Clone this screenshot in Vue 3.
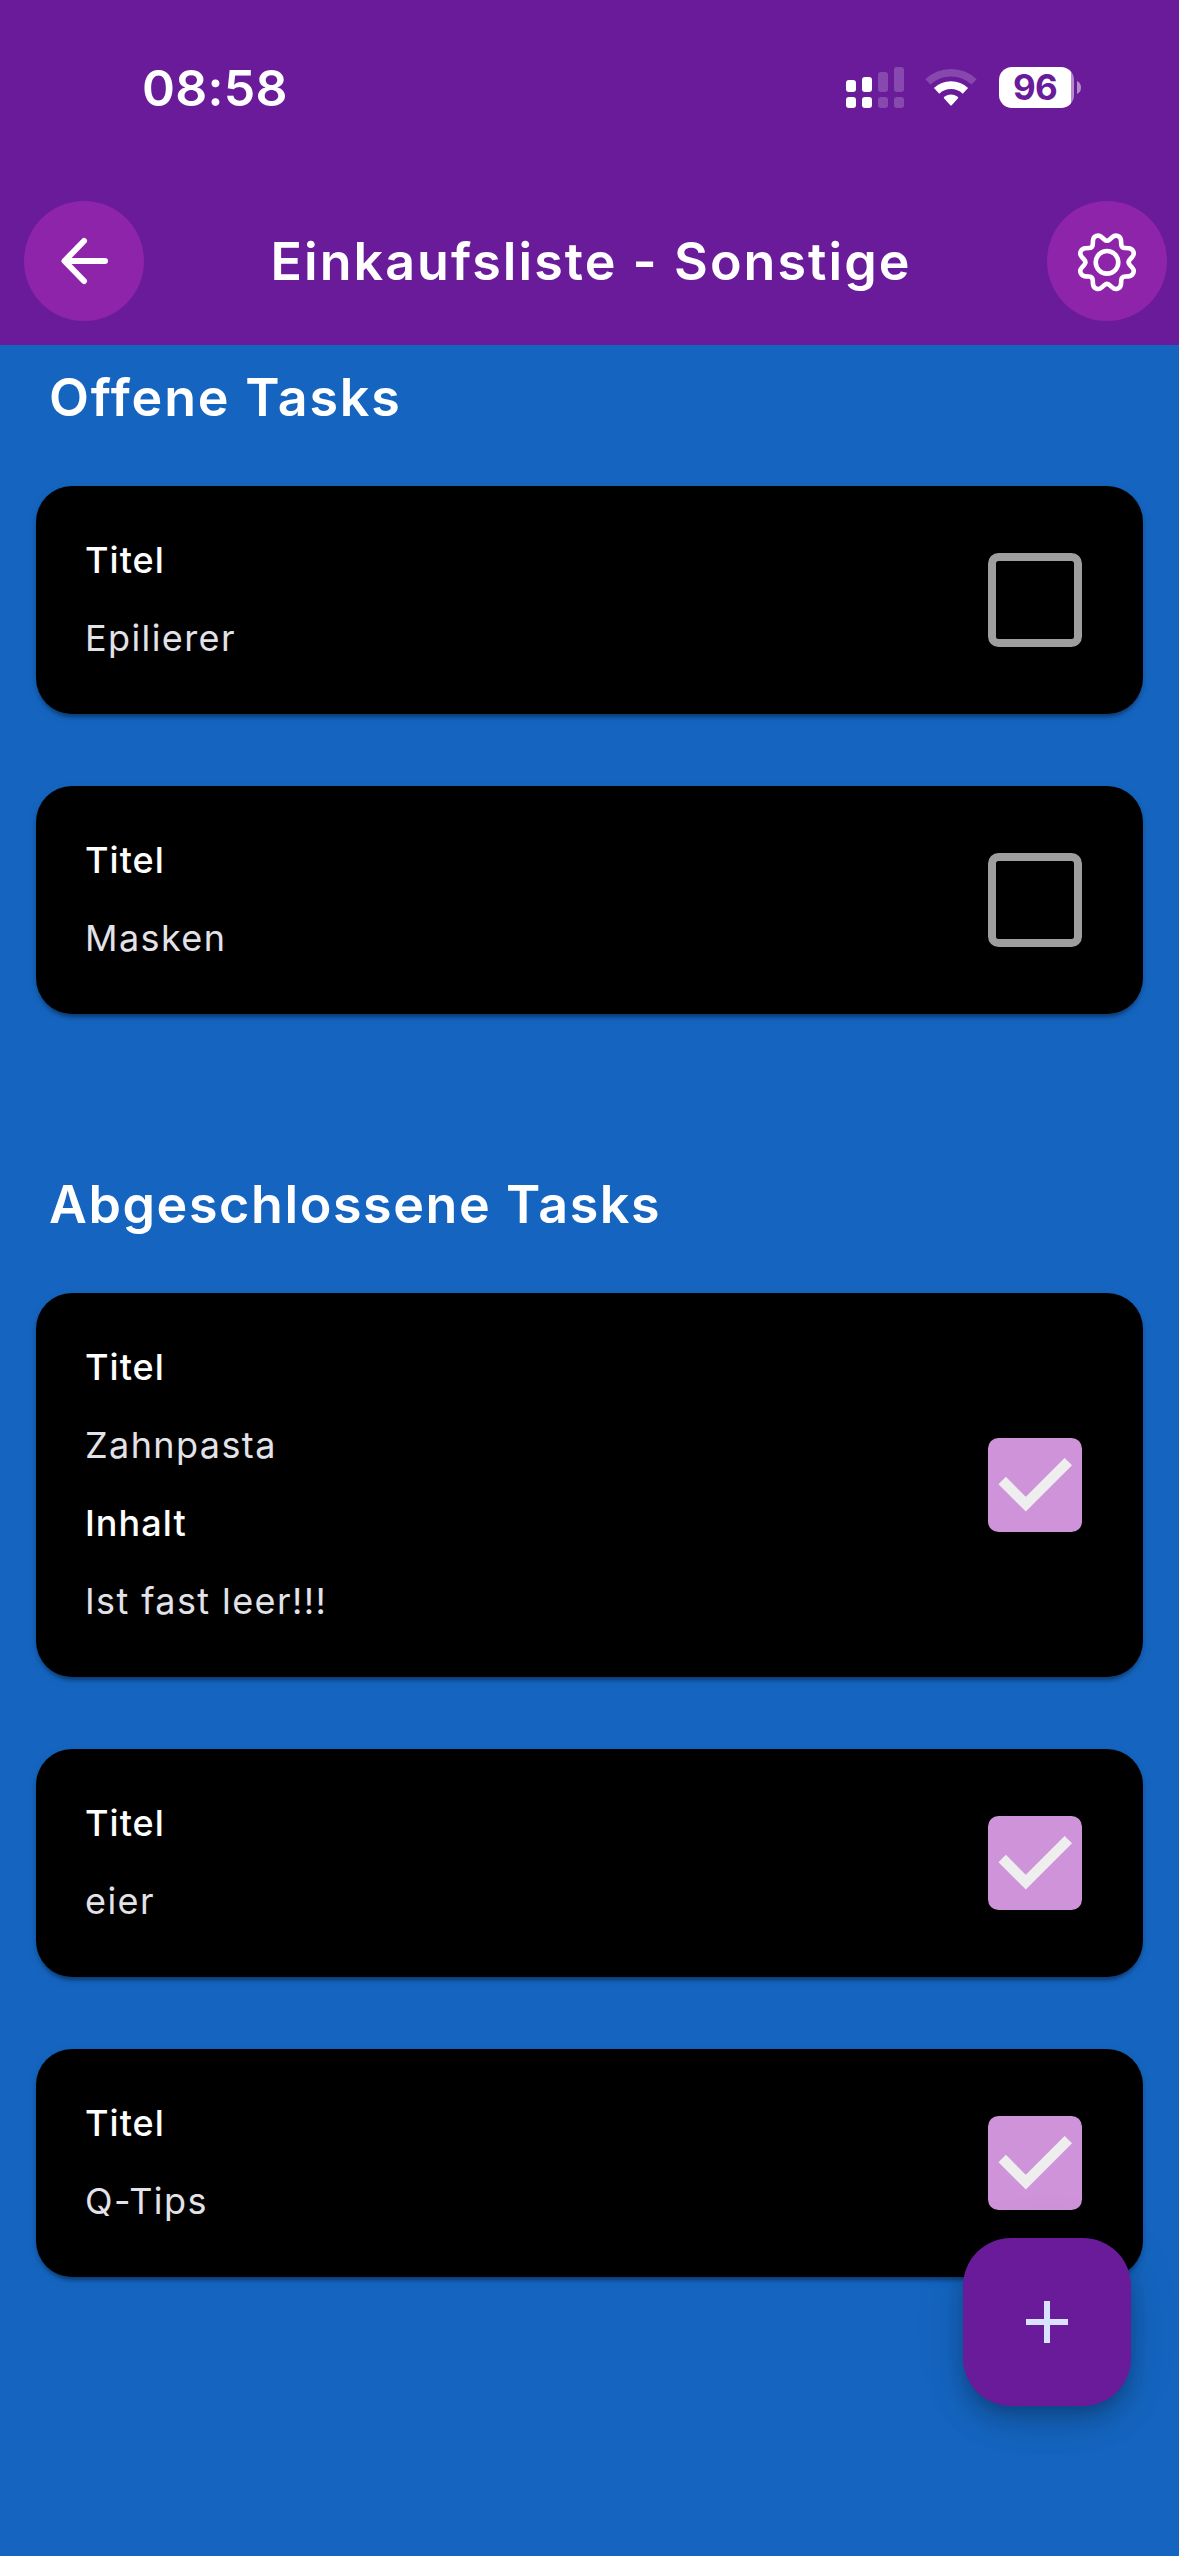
<script setup>
import { reactive } from 'vue'

const sections = reactive([
  {
    heading: 'Offene Tasks',
    kind: 'open',
    tasks: [
      { titel: 'Epilierer', done: false },
      { titel: 'Masken', done: false },
    ],
  },
  {
    heading: 'Abgeschlossene Tasks',
    kind: 'closed',
    tasks: [
      { titel: 'Zahnpasta', inhalt: 'Ist fast leer!!!', done: true },
      { titel: 'eier', done: true },
      { titel: 'Q-Tips', done: true },
    ],
  },
])

// Gear outline: eight teeth, every corner softened with a quadratic curve.
function gearPath(cx, cy) {
  const pts = []
  for (let k = 0; k < 8; k++) {
    for (const [deg, r, soft] of [[0, 20.4, 3.6], [16, 28.6, 3.6], [29, 28.6, 3.6]]) {
      const a = ((k * 45 + deg - 90) * Math.PI) / 180
      pts.push({ x: cx + r * Math.cos(a), y: cy + r * Math.sin(a), soft })
    }
  }
  const toward = (p, q, d) => {
    const len = Math.hypot(q.x - p.x, q.y - p.y)
    const t = Math.min(d, len * 0.45) / len
    return `${(p.x + (q.x - p.x) * t).toFixed(2)} ${(p.y + (q.y - p.y) * t).toFixed(2)}`
  }
  return (
    pts
      .map((p, i) => {
        const prev = pts[(i + pts.length - 1) % pts.length]
        const next = pts[(i + 1) % pts.length]
        return `${i ? 'L' : 'M'}${toward(p, prev, p.soft)}Q${p.x.toFixed(2)} ${p.y.toFixed(2)} ${toward(p, next, p.soft)}`
      })
      .join('') + 'Z'
  )
}
const gear = gearPath(60, 61.3)
</script>

<template>
  <div class="screen">
    <header class="top">
      <div class="status">
        <span class="clock">08:58</span>
        <div class="indicators">
          <svg class="signal" width="58" height="41" viewBox="0 0 58 41" fill="#fff">
            <rect x="0" y="13" width="10" height="12" rx="3" />
            <rect x="0" y="30" width="10" height="11" rx="3" />
            <rect x="16" y="10" width="10" height="15" rx="3" />
            <rect x="16" y="30" width="10" height="11" rx="3" />
            <g opacity="0.2">
              <rect x="32" y="5" width="10" height="20" rx="3" />
              <rect x="32" y="30" width="10" height="11" rx="3" />
              <rect x="48" y="0" width="10" height="25" rx="3" />
              <rect x="48" y="30" width="10" height="11" rx="3" />
            </g>
          </svg>
          <svg class="wifi" width="52" height="41" viewBox="0 0 52 41">
            <path d="M2.9 14.9A33.6 33.6 0 0 1 49.1 14.9" fill="none" stroke="#fff" stroke-opacity="0.2" stroke-width="7.4" />
            <path d="M11.6 23.8A21 21 0 0 1 40.4 23.8" fill="none" stroke="#fff" stroke-width="7.8" />
            <path d="M19.2 31.6Q18.2 30.6 19.3 29.8Q26 25.2 32.7 29.8Q33.8 30.6 32.8 31.6L26.7 38.2Q26 38.9 25.3 38.2Z" fill="#fff" />
          </svg>
          <div class="battery">
            <div class="cell"><span class="level">96</span></div>
            <svg width="4" height="13" viewBox="0 0 4 13"><path d="M0 0Q4 2 4 6.5T0 13Z" fill="#fff" fill-opacity="0.5" /></svg>
          </div>
        </div>
      </div>
      <div class="appbar">
        <button class="round" aria-label="Zurück">
          <svg width="120" height="120" viewBox="0 0 120 120" fill="none" stroke="#fff" stroke-width="6" stroke-linecap="round" stroke-linejoin="round">
            <path d="M60 40L40.5 60L60 80M41 60H81" />
          </svg>
        </button>
        <h1 class="title">Einkaufsliste - Sonstige</h1>
        <button class="round" aria-label="Einstellungen">
          <svg width="120" height="120" viewBox="0 0 120 120" fill="none" stroke="#fff" stroke-width="4.6" stroke-linejoin="round">
            <path :d="gear" />
            <circle cx="60" cy="61.3" r="11.3" />
          </svg>
        </button>
      </div>
    </header>

    <main>
      <section v-for="s in sections" :key="s.kind" :class="s.kind">
        <h2>{{ s.heading }}</h2>
        <div class="list">
          <article v-for="t in s.tasks" :key="t.titel" class="card">
            <dl>
              <dt>Titel</dt>
              <dd>{{ t.titel }}</dd>
              <template v-if="t.inhalt">
                <dt>Inhalt</dt>
                <dd>{{ t.inhalt }}</dd>
              </template>
            </dl>
            <button class="check" :class="{ on: t.done }" aria-label="Erledigt" @click="t.done = !t.done">
              <svg v-if="t.done" width="94.5" height="94.5" viewBox="0 0 18 18" fill="none" stroke="#eee" stroke-width="2">
                <path d="M2.7 8.1L7.2 12.6L15.3 4.5" />
              </svg>
            </button>
          </article>
        </div>
      </section>
    </main>

    <button class="fab" aria-label="Neuer Task">
      <svg width="42" height="42" viewBox="0 0 42 42" fill="#d9e2ff"><path d="M18 0H24V18H42V24H24V42H18V24H0V18H18Z" /></svg>
    </button>
  </div>
</template>

<style>
body {
  margin: 0;
  background: #1565c0;
}
</style>

<style scoped>
.screen {
  position: relative;
  box-sizing: border-box;
  width: 1179px;
  height: 2556px;
  overflow: hidden;
  background: #1565c0;
  color: #fff;
  font-family: Inter, "Liberation Sans", sans-serif;
}
button {
  padding: 0;
  border: 0;
  background: none;
}
h1, h2, dl, dd {
  margin: 0;
}
.top {
  height: 345px;
  background: #6a1b9a;
}
.status {
  display: flex;
  align-items: center;
  justify-content: space-between;
  height: 175px;
  padding: 0 98px 0 142px;
}
.clock {
  font-size: 50px;
  font-weight: 600;
  letter-spacing: 0.3px;
}
.indicators {
  display: flex;
  align-items: center;
}
.wifi {
  margin: 0 22px 0 21px;
}
.battery {
  display: flex;
  align-items: center;
  gap: 3px;
}
.cell {
  display: flex;
  align-items: center;
  justify-content: center;
  box-sizing: border-box;
  width: 75px;
  height: 41px;
  padding-right: 3px;
  border-radius: 13px;
  background: linear-gradient(90deg, #fff 72px, rgba(255, 255, 255, 0.5) 72px);
}
.level {
  color: #6a1b9a;
  font-size: 35px;
  font-weight: 700;
  line-height: 41px;
  letter-spacing: -0.7px;
}
.appbar {
  display: flex;
  align-items: center;
  height: 168px;
  padding: 2px 12px 0 24px;
}
.round {
  display: flex;
  width: 120px;
  height: 120px;
  border-radius: 50%;
  background: #8e24aa;
}
.title {
  flex: 1;
  padding: 2px 9px 0 0;
  font-size: 52px;
  font-weight: 600;
  line-height: 72px;
  letter-spacing: 2.05px;
  text-align: center;
  white-space: nowrap;
}
h2 {
  height: 72px;
  padding-left: 13px;
  font-size: 52px;
  font-weight: 600;
  line-height: 72px;
  letter-spacing: 1.85px;
}
.closed h2 {
  letter-spacing: 1.6px;
}
main {
  display: flex;
  flex-direction: column;
  gap: 155px;
  padding: 17px 36px 0;
}
section {
  display: flex;
  flex-direction: column;
  gap: 52px;
}
.list {
  display: flex;
  flex-direction: column;
  gap: 72px;
}
.card {
  display: flex;
  align-items: center;
  justify-content: space-between;
  padding: 35px 61px 37px 49px;
  border-radius: 36px;
  background: #000;
  box-shadow: 0 6px 3px -3px rgba(0, 0, 0, 0.2), 0 3px 4px rgba(0, 0, 0, 0.14), 0 3px 10px rgba(0, 0, 0, 0.12);
}
dt, dd {
  font-size: 36px;
  line-height: 78px;
}
dt {
  font-weight: 500;
  letter-spacing: 1.05px;
}
dd {
  color: #e3e2e9;
  font-weight: 400;
  letter-spacing: 1.4px;
}
.check {
  position: relative;
  top: 1px;
  display: flex;
  box-sizing: border-box;
  width: 94.5px;
  height: 94.5px;
  border: 8px solid #9e9e9e;
  border-radius: 10.5px;
}
.check.on {
  border: 0;
  background: #ce93d8;
}
.fab {
  position: absolute;
  right: 48px;
  bottom: 150px;
  display: flex;
  align-items: center;
  justify-content: center;
  width: 168px;
  height: 168px;
  border-radius: 48px;
  background: #6a1b9a;
  box-shadow: 0 9px 17px -3px rgba(0, 0, 0, 0.2), 0 18px 34px rgba(0, 0, 0, 0.14), 0 3px 56px rgba(0, 0, 0, 0.08);
}
</style>
